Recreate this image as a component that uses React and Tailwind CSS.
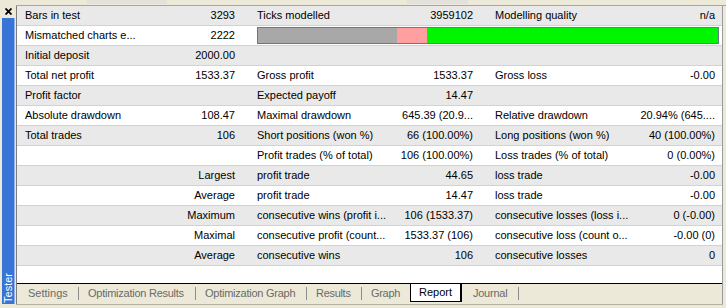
import React from "react";

const rows = [
  ["Bars in test", "3293", "Ticks modelled", "3959102", "Modelling quality", "n/a"],
  ["Mismatched charts e...", "2222", "BAR"],
  ["Initial deposit", "2000.00", "", "", "", ""],
  ["Total net profit", "1533.37", "Gross profit", "1533.37", "Gross loss", "-0.00"],
  ["Profit factor", "", "Expected payoff", "14.47", "", ""],
  ["Absolute drawdown", "108.47", "Maximal drawdown", "645.39 (20.9...", "Relative drawdown", "20.94% (645...."],
  ["Total trades", "106", "Short positions (won %)", "66 (100.00%)", "Long positions (won %)", "40 (100.00%)"],
  ["", "", "Profit trades (% of total)", "106 (100.00%)", "Loss trades (% of total)", "0 (0.00%)"],
  ["", "Largest", "profit trade", "44.65", "loss trade", "-0.00"],
  ["", "Average", "profit trade", "14.47", "loss trade", "-0.00"],
  ["", "Maximum", "consecutive wins (profit i...", "106 (1533.37)", "consecutive losses (loss i...", "0 (-0.00)"],
  ["", "Maximal", "consecutive profit (count...", "1533.37 (106)", "consecutive loss (count o...", "-0.00 (0)"],
  ["", "Average", "consecutive wins", "106", "consecutive losses", "0"],
];

function Row({ r, i }) {
  const bg = i % 2 === 0 ? "bg-[#e9e9e9]" : "bg-white";
  return (
    <div className={`grid grid-cols-[124px_108px_144px_94px_144px_91px] h-[20px] shrink-0 border-b border-[#d2d2d2] ${bg}`}>
      <div className="pl-[8px] flex items-center whitespace-nowrap overflow-hidden">{r[0]}</div>
      <div className="pr-[14px] flex items-center justify-end whitespace-nowrap overflow-hidden">{r[1]}</div>
      {r[2] === "BAR" ? (
        <div className="col-span-4 pl-[8px] pr-[3px] py-[1px]">
          <div className="h-[17px] border border-[#66788a] flex">
            <div className="w-[139px] bg-[#a8a8a8]"></div>
            <div className="w-[30px] bg-[#ff9f9f]"></div>
            <div className="flex-1 bg-[#00f500]"></div>
          </div>
        </div>
      ) : (
        <>
          <div className="pl-[8px] flex items-center whitespace-nowrap overflow-hidden">{r[2]}</div>
          <div className="pr-[14px] flex items-center justify-end whitespace-nowrap overflow-hidden">{r[3]}</div>
          <div className="pl-[8px] flex items-center whitespace-nowrap overflow-hidden">{r[4]}</div>
          <div className="pr-[7px] flex items-center justify-end whitespace-nowrap overflow-hidden">{r[5]}</div>
        </>
      )}
    </div>
  );
}

function Sep() {
  return <div className="w-px h-[13px] bg-[#8c8c8c] mr-[9px] shrink-0"></div>;
}

export default function App() {
  return (
    <div className="w-[726px] h-[308px] bg-[#ece9d8] flex font-['Liberation_Sans',Arial,sans-serif] text-[11px] text-black overflow-hidden">
      {/* sidebar */}
      <div className="w-[16px] shrink-0 flex flex-col">
        <div className="h-[18px] shrink-0 pt-[8px] pl-[5px] flex items-start">
          <svg width="7" height="7" viewBox="0 0 7 7" className="block">
            <path d="M0.5 0.5 L6.5 6.5 M6.5 0.5 L0.5 6.5" stroke="#000" strokeWidth="1.8" />
          </svg>
        </div>
        <div className="flex-1 mb-[4px] ml-[2px] w-[13px] bg-[#3873d6] border-r border-[#8fb2ee] flex flex-col justify-end items-center pb-[1px]">
          <span className="[writing-mode:vertical-rl] rotate-180 text-white leading-[12px]">Tester</span>
        </div>
      </div>
      {/* main */}
      <div className="flex-1 flex flex-col">
        <div className="h-[6px] shrink-0 border-b border-[#a5a5a5] flex">
          <div className="ml-[71px] w-[80px] h-[4px] bg-[#e2e1dc]"></div>
          <div className="ml-[240px] w-[61px] h-[4px] bg-[#e2e1dc]"></div>
        </div>
        <div className="flex-1 flex flex-col border-l border-[#7d7d7d] border-r border-r-[#9a9a9a] mr-[3px] bg-white">
          {rows.map((r, i) => (
            <Row key={i} r={r} i={i} />
          ))}
          <div className="flex-1"></div>
          <div className="h-[21px] shrink-0 border-t border-black bg-[#ece9d8] flex items-start pl-[11px] text-[#6a6a6a] whitespace-nowrap">
            <div className="h-[19px] flex items-center">
              <span className="w-[50px]">Settings</span>
              <Sep />
              <span className="w-[107px] tracking-[-0.25px]">Optimization Results</span>
              <Sep />
              <span className="w-[101px] tracking-[-0.25px]">Optimization Graph</span>
              <Sep />
              <span className="w-[45px] tracking-[-0.3px]">Results</span>
              <Sep />
              <span className="w-[39px] tracking-[-0.3px]">Graph</span>
            </div>
            <div className="w-[52px] h-[18px] pl-[8px] bg-white border-l border-black border-r-2 border-b flex items-center text-black">
              Report
            </div>
            <div className="h-[19px] flex items-center pl-[11px]">
              <span className="w-[45px] tracking-[-0.25px]">Journal</span>
              <Sep />
            </div>
          </div>
          <div className="h-[4px] shrink-0 border-t border-[#b5b2a4] bg-[#ece9d8] -mx-px"></div>
        </div>
      </div>
    </div>
  );
}
